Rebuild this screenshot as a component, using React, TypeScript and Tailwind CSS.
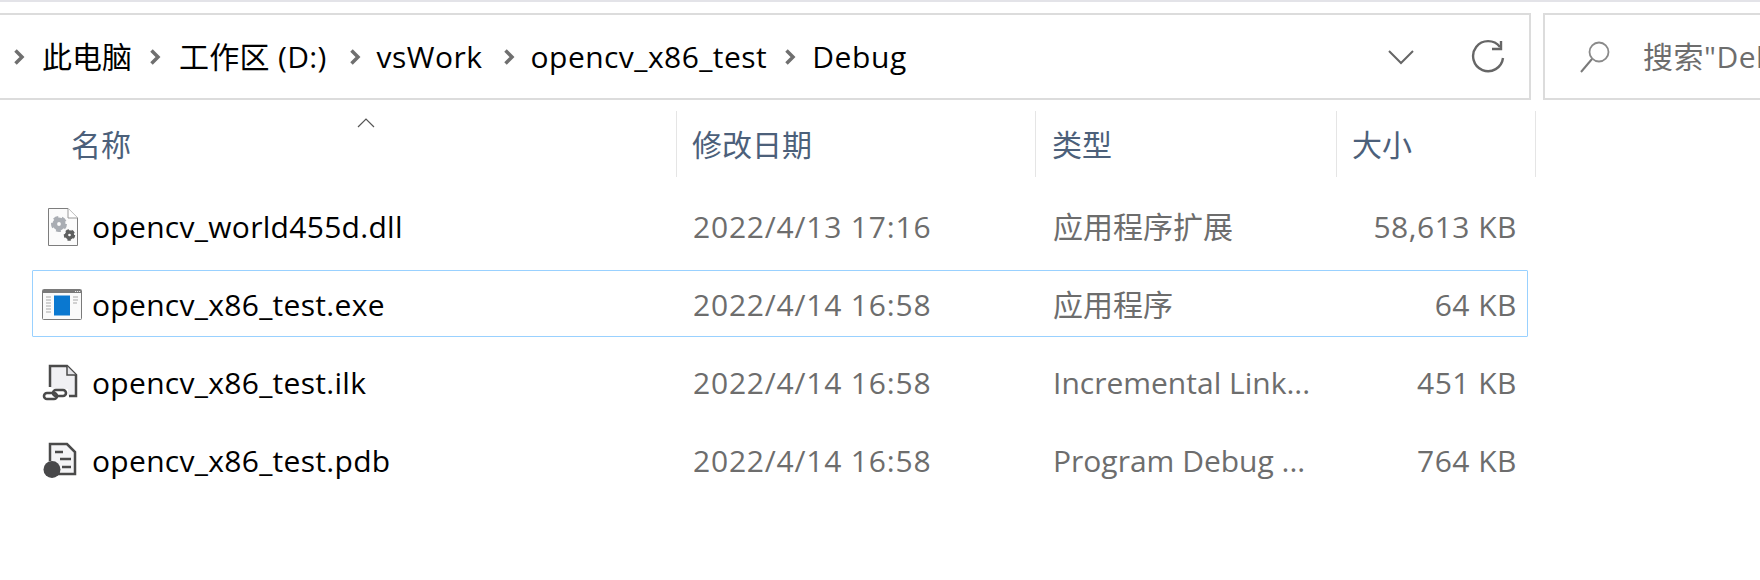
const FONT = "font-['Open_Sans','Noto_Sans_CJK_SC',sans-serif]";

const Chevron = () => (
  <svg width="12" height="20" viewBox="0 0 12 20" className="shrink-0">
    <path d="M2.5 3.5 L9 10 L2.5 16.5" fill="none" stroke="#6f6f6f" strokeWidth="3.5" />
  </svg>
);

const Gear = ({ cx, cy, r, fill }: { cx: number; cy: number; r: number; fill: string }) => (
  <g>
    <circle cx={cx} cy={cy} r={r} fill="none" stroke={fill} strokeWidth={r * 1.1} />
    <circle
      cx={cx}
      cy={cy}
      r={r * 1.55}
      fill="none"
      stroke={fill}
      strokeWidth={r * 0.7}
      strokeDasharray={`${r * 1.1} ${r * 0.85}`}
    />
  </g>
);

const DllIcon = () => (
  <svg width="40" height="40" viewBox="0 0 40 40">
    <path d="M6.5 1.5 H26 L35.5 11 V38.5 H6.500 Z" fill="#fbfbfb" stroke="#7d7d7d" />
    <path d="M26 1.500 V11 H35.500" fill="#fff" stroke="#9a9a9a" />
    <Gear cx={17} cy={17} r={4.2} fill="#a9adb3" />
    <Gear cx={27.500} cy={28} r={3} fill="#5f6060" />
  </svg>
);

const ExeIcon = () => (
  <svg width="40" height="32" viewBox="0 0 40 32">
    <rect x="0.500" y="0.500" width="39" height="30" rx="1" fill="#fafafa" stroke="#7a7a7a" />
    <rect x="1" y="1" width="38" height="3" fill="#7a7a7a" />
    <path d="M33 2.500h1.200M35 2.500h1.200M37 2.500h1.200" stroke="#e8e8e8" />
    <rect x="12" y="6.500" width="16" height="20" fill="#0a78d0" />
    <path d="M4 8h5M4 11h5M4 14h5M4 17h5M4 20h5M4 23h5M31 8h5M31 11h5M31 14h4" stroke="#a8a8a8" />
  </svg>
);

const IlkIcon = () => (
  <svg width="40" height="40" viewBox="0 0 40 40">
    <path d="M8 24 V3 H25 L34 12 V33 H27" fill="#f0f0f3" stroke="#4a4a4a" strokeWidth="2.500" />
    <path d="M7 26 H26 V33 H7 Z" fill="#fff" />
    <path d="M25 3 V12 H34" fill="#e4e4e8" stroke="#4a4a4a" strokeWidth="1.500" />
    <g fill="none" stroke="#4a4a4a" strokeWidth="2.600">
      <rect x="2" y="30" width="13" height="6" rx="3" />
      <rect x="11" y="27" width="13" height="6" rx="3" />
    </g>
  </svg>
);

const PdbIcon = () => (
  <svg width="40" height="40" viewBox="0 0 40 40">
    <path d="M8 20 V3 H25 L33 11 V33 H14" fill="#f4f4f6" stroke="#4a4a4a" strokeWidth="2.500" />
    <path d="M13 11h8M18 18h11M20 26h9" stroke="#4a4a4a" strokeWidth="2.500" />
    <circle cx="10" cy="28.500" r="8.500" fill="#48484a" />
  </svg>
);

const HEADERS = [
  { label: "名称", cls: "w-[677px] pl-[71px]" },
  { label: "修改日期", cls: "w-[359px] pl-[15px]" },
  { label: "类型", cls: "w-[301px] pl-[16px]" },
  { label: "大小", cls: "w-[199px] pl-[15px]" },
];

const ROWS = [
  { name: "opencv_world455d.dll", date: "2022/4/13 17:16", type: "应用程序扩展", size: "58,613 KB", icon: <DllIcon /> },
  { name: "opencv_x86_test.exe", date: "2022/4/14 16:58", type: "应用程序", size: "64 KB", icon: <ExeIcon />, selected: true },
  { name: "opencv_x86_test.ilk", date: "2022/4/14 16:58", type: "Incremental Link...", size: "451 KB", icon: <IlkIcon /> },
  { name: "opencv_x86_test.pdb", date: "2022/4/14 16:58", type: "Program Debug ...", size: "764 KB", icon: <PdbIcon /> },
];

export default function App() {
  return (
    <div className={`${FONT} w-[1760px] h-[580px] overflow-hidden bg-white`}>
      <div className="h-[2px] bg-[#e3e3e8]" />

      {/* address + search */}
      <div className="flex mt-[11px] h-[87px] gap-[12px]">
        <div className="w-[1531px] shrink-0 flex items-center border-y-2 border-r-2 border-[#dcdcdc] text-[30px] text-black pl-[13px]">
          <Chevron />
          <span className="ml-[17px]">此电脑</span>
          <span className="ml-[17px]"><Chevron /></span>
          <span className="ml-[18px] tracking-[0.3px]">工作区 (D:)</span>
          <span className="ml-[22px]"><Chevron /></span>
          <span className="ml-[16px] tracking-[0.5px]">vsWork</span>
          <span className="ml-[20px]"><Chevron /></span>
          <span className="ml-[16px] tracking-[0.45px]">opencv_x86_test</span>
          <span className="ml-[17px]"><Chevron /></span>
          <span className="ml-[16px] tracking-[0.6px]">Debug</span>
          <svg width="28" height="18" viewBox="0 0 28 18" className="ml-auto">
            <path d="M2 3 L14 15 L26 3" fill="none" stroke="#666" strokeWidth="2" />
          </svg>
          <svg width="34" height="36" viewBox="0 0 34 36" className="ml-[56px] mr-[24px]">
            <path d="M29 8 A15 15 0 1 0 32 19" fill="none" stroke="#666" strokeWidth="2.400" />
            <path d="M30 2 V10 H21" fill="none" stroke="#666" strokeWidth="2.400" />
          </svg>
        </div>
        <div className="flex-1 flex items-center border-y-2 border-l-2 border-[#dcdcdc] text-[30px] text-[#6d6d6d] pl-[34px] whitespace-nowrap overflow-hidden">
          <svg width="32" height="34" viewBox="0 0 32 34" className="shrink-0">
            <circle cx="20" cy="12" r="9.500" fill="none" stroke="#8a8a8a" strokeWidth="1.800" />
            <path d="M13 19 L2 32" stroke="#7a7a7a" strokeWidth="2" />
          </svg>
          <span className="ml-[32px] tracking-[0.5px]">搜索"Debug"</span>
        </div>
      </div>

      {/* column headers */}
      <div className="relative flex items-center h-[66px] mt-[11px] text-[30px] text-[#4c607a]">
        {HEADERS.map((h) => (
          <div key={h.label} className={`${h.cls} h-full flex items-center shrink-0 border-r border-[#e5e5e5]`}>
            {h.label}
          </div>
        ))}
        <svg width="18" height="10" viewBox="0 0 18 10" className="absolute left-[357px] top-[7px]">
          <path d="M1 9 L9 1 L17 9" fill="none" stroke="#555" strokeWidth="1.200" />
        </svg>
      </div>

      {/* file rows */}
      <div className="mt-[15px] ml-[32px] w-[1496px] flex flex-col gap-[11px]">
        {ROWS.map((r) => (
          <div
            key={r.name}
            className={`h-[67px] flex items-center border rounded-[1px] pt-[2px] text-[30px] whitespace-nowrap ${
              r.selected ? "border-[#99d1ff]" : "border-transparent"
            }`}
          >
            <div className="w-[660px] flex items-center shrink-0 text-black tracking-[0.3px]">
              <div className="w-[40px] ml-[9px] mr-[10px] flex justify-center">{r.icon}</div>
              {r.name}
            </div>
            <div className="w-[360px] shrink-0 text-[#6d6d6d] tracking-[0.8px]">{r.date}</div>
            <div className="w-[260px] shrink-0 text-[#6d6d6d]">{r.type}</div>
            <div className="flex-1 text-right pr-[10px] text-[#6d6d6d] tracking-[0.5px]">{r.size}</div>
          </div>
        ))}
      </div>
    </div>
  );
}
